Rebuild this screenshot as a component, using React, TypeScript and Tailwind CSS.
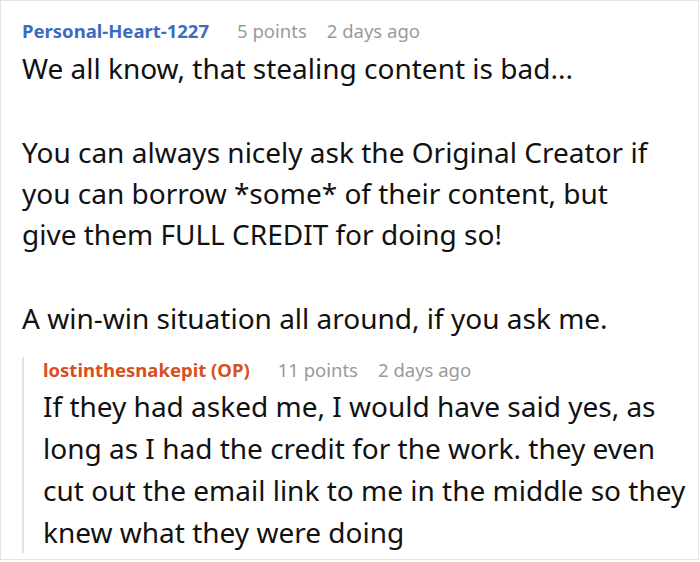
const font = { fontFamily: '"Noto Sans", "Open Sans", sans-serif' };

export default function App() {
  return (
    <div className="w-[700px] h-[562px] bg-white" style={font}>
      <div className="w-[699px] h-[560px] border border-[#e4e4e4] pl-[21px] pt-[17px] overflow-hidden">
        <div className="flex items-baseline text-[18.5px] leading-[26px]">
          <span className="font-bold text-[#3b6cc0]">Personal-Heart-1227</span>
          <span className="ml-[28px] text-[#9a9a9a]">5 points</span>
          <span className="ml-[20px] text-[#9a9a9a]">2 days ago</span>
        </div>
        <div className="mt-[4px] text-[28px] leading-[41px] text-[#111]">
          <p>We all know, that stealing content is bad...</p>
          <p className="mt-[43px]">
            You can always nicely ask the Original Creator if
            <br />
            you can borrow *some* of their content, but
            <br />
            give them FULL CREDIT for doing so!
          </p>
          <p className="mt-[43px]">A win-win situation all around, if you ask me.</p>
        </div>
        <div className="mt-[30px] border-l-2 border-[#e2e2e2] pl-[19px]">
          <div className="-mt-[12px] flex items-baseline text-[18.5px] leading-[26px]">
            <span className="font-bold text-[#d7501d]">lostinthesnakepit (OP)</span>
            <span className="ml-[28px] text-[#9a9a9a]">11 points</span>
            <span className="ml-[20px] text-[#9a9a9a]">2 days ago</span>
          </div>
          <p className="mt-[2px] -mb-[9px] text-[28px] leading-[42px] text-[#111]">
            If they had asked me, I would have said yes, as long as I had the credit for the work. they even cut out the email link to me in the middle so they knew what they were doing
          </p>
        </div>
      </div>
    </div>
  );
}
